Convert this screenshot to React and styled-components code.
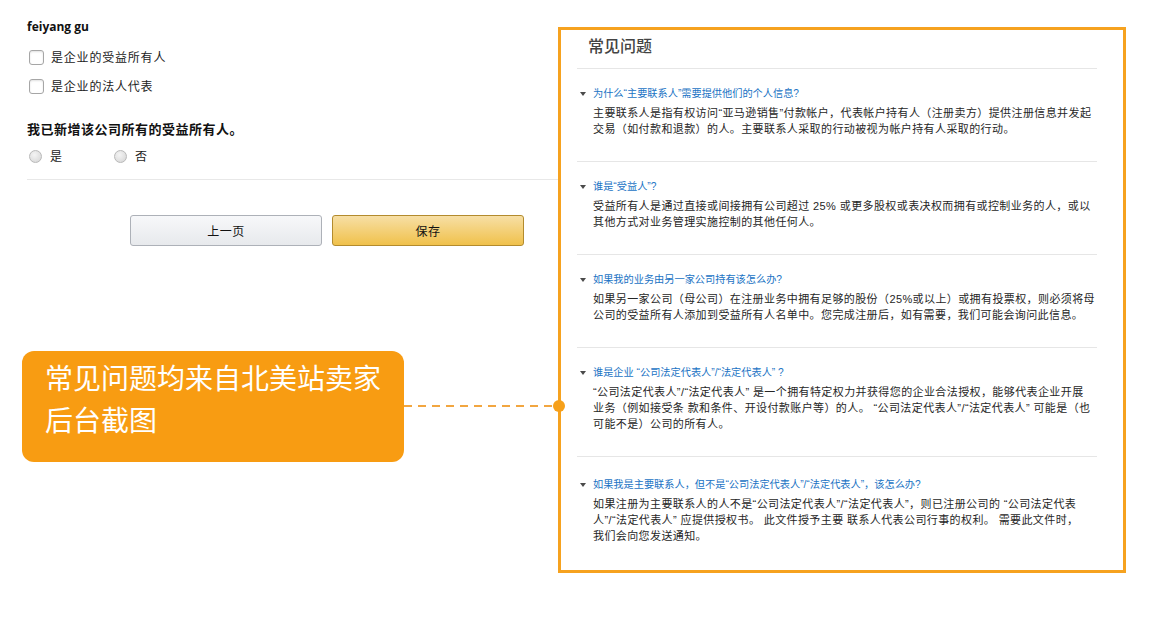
import React from 'react';
import styled, { createGlobalStyle } from 'styled-components';

const GlobalStyle = createGlobalStyle`
  body {
    margin: 0;
    background: #fff;
    font-family: "Liberation Sans", "Noto Sans CJK SC", sans-serif;
    color: #222;
  }
`;

const faqs = [
  {
    q: '为什么“主要联系人”需要提供他们的个人信息?',
    a: [
      '主要联系人是指有权访问“亚马逊销售”付款帐户，代表帐户持有人（注册卖方）提供注册信息并发起',
      '交易（如付款和退款）的人。主要联系人采取的行动被视为帐户持有人采取的行动。',
    ],
  },
  {
    q: '谁是“受益人”?',
    a: [
      '受益所有人是通过直接或间接拥有公司超过 25% 或更多股权或表决权而拥有或控制业务的人，或以',
      '其他方式对业务管理实施控制的其他任何人。',
    ],
  },
  {
    q: '如果我的业务由另一家公司持有该怎么办?',
    a: [
      '如果另一家公司（母公司）在注册业务中拥有足够的股份（25%或以上）或拥有投票权，则必须将母',
      '公司的受益所有人添加到受益所有人名单中。您完成注册后，如有需要，我们可能会询问此信息。',
    ],
  },
  {
    q: '谁是企业 “公司法定代表人”/“法定代表人” ?',
    a: [
      '“公司法定代表人”/“法定代表人” 是一个拥有特定权力并获得您的企业合法授权，能够代表企业开展',
      '业务（例如接受条 款和条件、开设付款账户等）的人。 “公司法定代表人”/“法定代表人” 可能是（也',
      '可能不是）公司的所有人。',
    ],
  },
  {
    q: '如果我是主要联系人，但不是“公司法定代表人”/“法定代表人”，该怎么办?',
    a: [
      '如果注册为主要联系人的人不是“公司法定代表人”/“法定代表人”，则已注册公司的 “公司法定代表',
      '人”/“法定代表人” 应提供授权书。 此文件授予主要 联系人代表公司行事的权利。 需要此文件时，',
      '我们会向您发送通知。',
    ],
  },
];

function App() {
  return (
    <>
      <GlobalStyle />
      <Page>
        <FormColumn>
          <Name>feiyang gu</Name>
          <CheckRow>
            <CheckBox />
            <Label>是企业的受益所有人</Label>
          </CheckRow>
          <CheckRow>
            <CheckBox />
            <Label>是企业的法人代表</Label>
          </CheckRow>
          <Question>我已新增该公司所有的受益所有人。</Question>
          <RadioRow>
            <RadioOption>
              <Radio />
              <Label>是</Label>
            </RadioOption>
            <RadioOption>
              <Radio />
              <Label>否</Label>
            </RadioOption>
          </RadioRow>
          <Divider />
          <ButtonRow>
            <Button type="button">上一页</Button>
            <Button type="button" primary>
              保存
            </Button>
          </ButtonRow>
          <Callout>
            常见问题均来自北美站卖家
            <br />
            后台截图
            <Connector />
          </Callout>
        </FormColumn>

        <FaqPanel>
          <FaqHeader>常见问题</FaqHeader>
          <FaqList>
            {faqs.map((item) => (
              <FaqItem key={item.q}>
                <FaqTitle>
                  <Caret viewBox="0 0 6 4">
                    <path d="M0 0h6L3 4z" fill="#4a4a4a" />
                  </Caret>
                  {item.q}
                </FaqTitle>
                <FaqBody>
                  {item.a.map((line) => (
                    <div key={line}>{line}</div>
                  ))}
                </FaqBody>
              </FaqItem>
            ))}
          </FaqList>
        </FaqPanel>
      </Page>
    </>
  );
}

const Page = styled.div`
  display: flex;
  align-items: flex-start;
  padding: 19px 0 0 27px;
  width: 1158px;
  box-sizing: border-box;
`;

const FormColumn = styled.div`
  width: 531px;
  display: flex;
  flex-direction: column;
  align-items: flex-start;
`;

const Name = styled.div`
  font-family: "Open Sans", "Noto Sans CJK SC", sans-serif;
  font-size: 12px;
  line-height: 16px;
  font-weight: 700;
  color: #111;
`;

const CheckRow = styled.div`
  display: flex;
  align-items: center;
  height: 20px;
  margin-top: 12px;
  padding-left: 2px;
  gap: 7px;

  & + & {
    margin-top: 9px;
  }
`;

const CheckBox = styled.span`
  width: 13px;
  height: 13px;
  border: 1px solid #a6a6a6;
  border-radius: 3px;
  background: #fff;
  box-shadow: inset 0 1px 2px rgba(0, 0, 0, 0.12);
`;

const Label = styled.span`
  font-family: "Noto Sans CJK SC", sans-serif;
  font-size: 12px;
  letter-spacing: 0.8px;
  line-height: 18px;
  color: #222;
`;

const Question = styled.div`
  margin-top: 24px;
  font-family: "Noto Sans CJK SC", sans-serif;
  font-size: 13px;
  letter-spacing: 0.5px;
  line-height: 18px;
  font-weight: 700;
  color: #111;
`;

const RadioRow = styled.div`
  display: flex;
  margin-top: 9px;
  padding-left: 2px;
`;

const RadioOption = styled.label`
  display: flex;
  align-items: center;
  gap: 8px;
  width: 85px;
  height: 18px;
`;

const Radio = styled.span`
  width: 11px;
  height: 11px;
  border-radius: 50%;
  border: 1px solid #b9b9b9;
  background: radial-gradient(circle at 40% 35%, #f4f4f4, #d4d4d4);
`;

const Divider = styled.div`
  align-self: stretch;
  height: 1px;
  background: #e8e8e8;
  margin-top: 14px;
`;

const ButtonRow = styled.div`
  display: flex;
  gap: 10px;
  margin-top: 35px;
  padding-left: 103px;
`;

const Button = styled.button`
  width: 192px;
  height: 31px;
  border-radius: 3px;
  border: 1px solid ${(p) => (p.primary ? '#b38b2d' : '#adb1b8')};
  background: ${(p) =>
    p.primary
      ? 'linear-gradient(to bottom, #f7dfa5, #f0c14b)'
      : 'linear-gradient(to bottom, #f7f8fa, #e7e9ec)'};
  font-family: "Noto Sans CJK SC", sans-serif;
  font-size: 12px;
  letter-spacing: 0.5px;
  color: #111;
  padding: 0;
`;

const Callout = styled.div`
  position: relative;
  z-index: 2;
  margin: 105px 0 0 -5px;
  width: 382px;
  height: 111px;
  box-sizing: border-box;
  padding: 5px 0 0 23px;
  border-radius: 12px;
  background: #f89c12;
  color: #fff;
  font-family: "Noto Sans CJK SC", sans-serif;
  font-size: 28px;
  line-height: 42px;
`;

const Connector = styled.span`
  position: absolute;
  left: 100%;
  top: 54px;
  width: 154px;
  height: 2px;
  background: repeating-linear-gradient(
    to right,
    #f2a640 0 8px,
    transparent 8px 14px
  );

  &::after {
    content: '';
    position: absolute;
    right: -7px;
    top: -5px;
    width: 12px;
    height: 12px;
    border-radius: 50%;
    background: #f6a01a;
  }
`;

const FaqPanel = styled.section`
  margin-top: 8px;
  width: 568px;
  height: 546px;
  box-sizing: border-box;
  border: 3px solid #f6a21f;
  background: #fff;
  padding: 5px 26px 0 16px;
`;

const FaqHeader = styled.h2`
  margin: 0;
  padding: 0 0 13px 11px;
  font-family: "Noto Sans CJK SC", serif;
  font-size: 16px;
  line-height: 20px;
  font-weight: 500;
  color: #444;
  border-bottom: 1px solid #e6e6e6;
`;

const FaqList = styled.div`
  display: flex;
  flex-direction: column;
`;

const FaqItem = styled.div`
  padding: 18px 0 24px;
  border-bottom: 1px solid #e6e6e6;

  &:last-child {
    border-bottom: none;
    padding-top: 21px;
  }
`;

const FaqTitle = styled.div`
  display: flex;
  align-items: center;
  font-size: 10.2px;
  line-height: 14px;
  color: #1a73c4;
`;

const Caret = styled.svg`
  width: 6px;
  height: 4px;
  margin: 0 7px 0 3px;
  flex-shrink: 0;
`;

const FaqBody = styled.div`
  margin: 4px 0 0 16px;
  font-size: 11px;
  letter-spacing: 0.4px;
  line-height: 16px;
  color: #262626;
  white-space: nowrap;
`;

export default App;
